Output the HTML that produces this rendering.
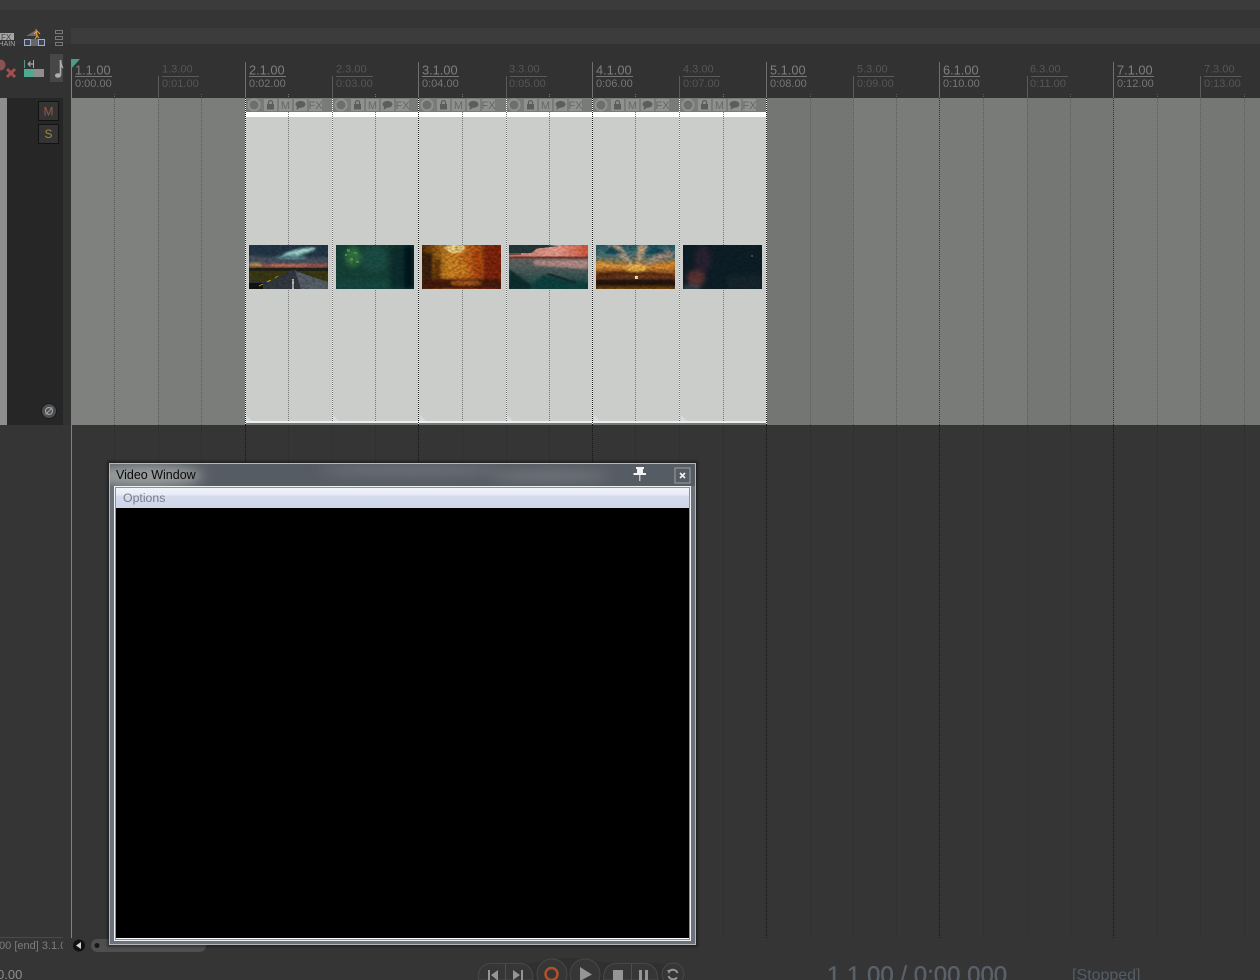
<!DOCTYPE html>
<html lang="en">
<head>
<meta charset="utf-8">
<title>Video Window</title>
<style>
html,body{margin:0;padding:0;width:1260px;height:980px;overflow:hidden;background:#353535}
svg{display:block}
text{font-family:"Liberation Sans",sans-serif}
.b{font-size:12.8px;fill:#7f7f7f}
.t{font-size:11px;fill:#767676}
.hb{font-size:11px;fill:#565656}
.ht{font-size:11px;fill:#565656}
.ic{font-size:11px;fill:#666866;text-anchor:middle}
</style>
</head>
<body>
<svg width="1260" height="980" viewBox="0 0 1260 980" xmlns="http://www.w3.org/2000/svg">
<defs>
<filter id="bl1" x="-20%" y="-20%" width="140%" height="140%"><feGaussianBlur stdDeviation="1"/></filter>
<filter id="bl2" x="-30%" y="-30%" width="160%" height="160%"><feGaussianBlur stdDeviation="2.5"/></filter>
<filter id="bl6" x="-30%" y="-60%" width="160%" height="220%"><feGaussianBlur stdDeviation="6"/></filter>
<filter id="tex" x="0" y="0" width="100%" height="100%"><feTurbulence type="fractalNoise" baseFrequency=".3 .45" numOctaves="2" seed="7"/><feColorMatrix values="0 0 0 0 0  0 0 0 0 0  0 0 0 0 0  1.600 0 0 0 -.55"/></filter>
<linearGradient id="menu" x1="0" y1="0" x2="0" y2="1"><stop offset="0" stop-color="#f2f4fb"/><stop offset=".35" stop-color="#e6eaf6"/><stop offset=".4" stop-color="#d5dcee"/><stop offset="1" stop-color="#cdd5e8"/></linearGradient>
<linearGradient id="sky3" x1="0" y1="0" x2="1" y2="0"><stop offset="0" stop-color="#5a3208"/><stop offset=".35" stop-color="#d88c24"/><stop offset=".6" stop-color="#c8641a"/><stop offset="1" stop-color="#84280c"/></linearGradient>
<linearGradient id="sky4" x1="0" y1="0" x2="1" y2="0"><stop offset="0" stop-color="#c87a6e"/><stop offset=".6" stop-color="#eaa090"/><stop offset="1" stop-color="#d8583c"/></linearGradient>
<linearGradient id="dark4" x1="0" y1="0" x2="0" y2="1"><stop offset="0" stop-color="#7a6c6a"/><stop offset=".5" stop-color="#566260"/><stop offset="1" stop-color="#124442"/></linearGradient>
<linearGradient id="t5" x1="0" y1="0" x2="0" y2="1"><stop offset="0" stop-color="#27616e"/><stop offset=".25" stop-color="#557a78"/><stop offset=".5" stop-color="#d08430"/><stop offset=".72" stop-color="#7a4220"/><stop offset=".88" stop-color="#2a1a10"/><stop offset="1" stop-color="#7a4a10"/></linearGradient>
<g id="slot">
<circle cx="9" cy="7" r="6.500" fill="#8f918f"/><circle cx="9" cy="7" r="4.500" fill="#6d6f6d"/>
<rect x="19" y="1" width="13" height="12" fill="#8f918f"/><rect x="22" y="6" width="7" height="5.500" fill="#5c5e5c"/><path d="M23.500 6V4.500a2 2 0 0 1 4 0V6" fill="none" stroke="#5c5e5c" stroke-width="1.300"/>
<rect x="34" y="1" width="13" height="12" fill="#8f918f"/>
<rect x="49" y="1" width="13" height="12" fill="#8f918f"/><ellipse cx="55.500" cy="6.300" rx="5" ry="3.400" fill="#5c5e5c"/><path d="M52 8.500L51.500 12L56 9z" fill="#5c5e5c"/>
<rect x="64" y="1" width="13" height="12" fill="#8f918f"/>
</g>
</defs>

<!-- base -->
<rect width="1260" height="980" fill="#353535"/>
<rect width="1260" height="10" fill="#3b3b3b"/>
<rect x="71" y="28" width="1189" height="16" fill="#3c3c3c"/>
<rect y="44" width="1260" height="54" fill="#323232"/>
<rect y="98" x="63" width="8" height="327" fill="#323232"/>

<!-- track -->
<rect x="71" y="98" width="1189" height="327" fill="#797b79"/>
<rect x="71" y="98" width="87" height="327" fill="#7f817f"/>
<rect x="158" y="98" width="87" height="327" fill="#7b7d7b"/>
<rect x="766" y="98" width="87" height="327" fill="#747674"/>
<rect x="853" y="98" width="87" height="327" fill="#7a7c7a"/>
<rect x="1027" y="98" width="86" height="327" fill="#757775"/>
<rect x="1200" y="98" width="60" height="327" fill="#757775"/>

<!-- media item -->
<rect x="245" y="112" width="522" height="5" fill="#ffffff"/>
<rect x="245" y="117" width="522" height="304" fill="#cbcdcb"/>
<rect x="245" y="421" width="522" height="2" fill="#eeeeee"/>
<rect x="245" y="423" width="522" height="2" fill="#767876"/>
<g fill="#dfe2ec" opacity=".6">
<path d="M246 415l6 6h-6z"/><path d="M333 415l6 6h-6z"/><path d="M420 415l6 6h-6z"/><path d="M507 415l6 6h-6z"/><path d="M594 415l6 6h-6z"/><path d="M681 415l6 6h-6z"/>
</g>

<!-- lower arrangement grid -->
<g shape-rendering="crispEdges" fill="none">
<path stroke="#5b5d5b" stroke-dasharray="1 1" d="M114.500 94V425M201.500 94V425M810.500 94V425M896.500 94V425M983.500 94V425M1070.500 94V425M1157.500 94V425M1244.500 94V425"/>
<path stroke="#777" stroke-dasharray="1 1" d="M288.500 94V421M375.500 94V421M462.500 94V421M549.500 94V421M635.500 94V421M723.500 94V421"/>
<path stroke="#5a5c5a" stroke-dasharray="1 1" d="M158.500 98V425M853.500 98V425M1027.500 98V425M1200.500 98V425"/>
<path stroke="#ffffff" d="M332.500 98V421M506.500 98V421M679.500 98V421M245.500 98V425M418.500 98V425M592.500 98V425M766.500 98V425"/>
<path stroke="#666" stroke-dasharray="1 1" d="M332.500 98V421M506.500 98V421M679.500 98V421"/>
<path stroke="#111" stroke-dasharray="1 1" d="M245.500 98V425M418.500 98V425M592.500 98V425M766.500 98V425"/>
<path stroke="#333" stroke-dasharray="1 1" d="M939.500 98V425M1113.500 98V425"/>
<path stroke="#2b2b2b" stroke-dasharray="1 1" d="M114.500 425V938M201.500 425V938M288.500 425V463M375.500 425V463M462.500 425V463M549.500 425V463M635.500 425V463M723.500 425V938M810.500 425V938M896.500 425V938M983.500 425V938M1070.500 425V938M1157.500 425V938M1244.500 425V938"/>
<path stroke="#2d2d2d" stroke-dasharray="1 1" d="M158.500 425V463M332.500 425V463M506.500 425V463M679.500 425V463M853.500 425V938M1027.500 425V938M1200.500 425V938"/>
<path stroke="#151515" stroke-dasharray="1 1" d="M245.500 425V463M418.500 425V463M592.500 425V463M766.500 425V938M939.500 425V938M1113.500 425V938"/>
<!-- ruler ticks -->
<path stroke="#6f6f6f" d="M245.500 62V98M418.500 62V98M592.500 62V98M766.500 62V98M939.500 62V98M1113.500 62V98"/>
<path stroke="#5a5a5a" d="M158.500 76V98M332.500 76V98M506.500 76V98M679.500 76V98M853.500 76V98M1027.500 76V98M1200.500 76V98"/>
<path stroke="#777" d="M75 76.500H112M249 76.500H286M422 76.500H459M596 76.500H633M770 76.500H807M943 76.500H980M1117 76.500H1154"/>
<path stroke="#5a5a5a" d="M162 76.500H199M336 76.500H373M510 76.500H547M683 76.500H720M857 76.500H894M1031 76.500H1068M1204 76.500H1241"/>
<!-- teal playhead line -->
<path stroke="#4b9c88" d="M71.500 62V938"/>
</g>
<path d="M71 59H80L71 69z" fill="#4b9c88"/>

<!-- ruler labels -->
<text class="b" x="75" y="74.500">1.1.00</text><text class="t" x="75" y="87">0:00.00</text>
<text class="hb" x="162" y="72.500">1.3.00</text><text class="ht" x="162" y="87">0:01.00</text>
<text class="b" x="249" y="74.500">2.1.00</text><text class="t" x="249" y="87">0:02.00</text>
<text class="hb" x="336" y="72.500">2.3.00</text><text class="ht" x="336" y="87">0:03.00</text>
<text class="b" x="422" y="74.500">3.1.00</text><text class="t" x="422" y="87">0:04.00</text>
<text class="hb" x="509" y="72.500">3.3.00</text><text class="ht" x="509" y="87">0:05.00</text>
<text class="b" x="596" y="74.500">4.1.00</text><text class="t" x="596" y="87">0:06.00</text>
<text class="hb" x="683" y="72.500">4.3.00</text><text class="ht" x="683" y="87">0:07.00</text>
<text class="b" x="770" y="74.500">5.1.00</text><text class="t" x="770" y="87">0:08.00</text>
<text class="hb" x="857" y="72.500">5.3.00</text><text class="ht" x="857" y="87">0:09.00</text>
<text class="b" x="943" y="74.500">6.1.00</text><text class="t" x="943" y="87">0:10.00</text>
<text class="hb" x="1030" y="72.500">6.3.00</text><text class="ht" x="1030" y="87">0:11.00</text>
<text class="b" x="1117" y="74.500">7.1.00</text><text class="t" x="1117" y="87">0:12.00</text>
<text class="hb" x="1204" y="72.500">7.3.00</text><text class="ht" x="1204" y="87">0:13.00</text>

<!-- item header icons -->
<use href="#slot" x="245" y="98"/><text class="ic" x="285.500" y="109">M</text><text class="ic" x="315.500" y="109">FX</text>
<use href="#slot" x="332" y="98"/><text class="ic" x="372.500" y="109">M</text><text class="ic" x="402.500" y="109">FX</text>
<use href="#slot" x="418" y="98"/><text class="ic" x="458.500" y="109">M</text><text class="ic" x="488.500" y="109">FX</text>
<use href="#slot" x="505" y="98"/><text class="ic" x="545.500" y="109">M</text><text class="ic" x="575.500" y="109">FX</text>
<use href="#slot" x="592" y="98"/><text class="ic" x="632.500" y="109">M</text><text class="ic" x="662.500" y="109">FX</text>
<use href="#slot" x="679" y="98"/><text class="ic" x="719.500" y="109">M</text><text class="ic" x="749.500" y="109">FX</text>

<!-- thumbnails -->
<svg x="249" y="245" width="79" height="44" viewBox="0 0 79 44">
<rect width="79" height="44" fill="#24384a"/>
<g filter="url(#bl1)">
<path d="M0 10Q30 14 79 12V20H0z" fill="#4a5360"/>
<ellipse cx="50" cy="7" rx="17" ry="2.800" fill="#a5dcd4" transform="rotate(-12 50 7)"/>
<ellipse cx="42" cy="12" rx="15" ry="2.200" fill="#5c8c92"/>
<rect y="19" width="79" height="3.500" fill="#a8584e"/>
<rect x="22" y="19.500" width="36" height="2" fill="#d07a58"/>
<rect x="0" y="18" width="12" height="3" fill="#b89a50"/>
</g>
<rect y="23" width="79" height="14" fill="#3c3a14"/>
<rect y="23" width="79" height="3" fill="#23241a"/>
<path d="M43 25L46 25L79 38V44H8z" fill="#333a41"/>
<path d="M46 26L79 37V44H52z" fill="#59626a"/>
<rect y="38" width="14" height="6" fill="#15140e"/>
<path d="M10 41L14 39M18 37L22 35M26 33L29 31" stroke="#c89028" stroke-width="1"/>
<rect x="43" y="34" width="2" height="10" fill="#b8bcbc"/>
<rect width="79" height="44" filter="url(#tex)" opacity=".35"/>
</svg>
<svg x="336" y="245" width="78" height="44" viewBox="0 0 78 44">
<rect width="78" height="44" fill="#164238"/>
<g filter="url(#bl2)">
<ellipse cx="17" cy="12" rx="8" ry="10" fill="#32703f"/>
<ellipse cx="38" cy="14" rx="13" ry="13" fill="#1b4e46"/>
<rect x="54" width="24" height="44" fill="#0d2e2e"/>
<rect y="36" width="54" height="8" fill="#174a42"/>
<rect x="68" width="10" height="44" fill="#06181c"/>
</g>
<g fill="#4d8f52"><rect x="11" y="4" width="3" height="3"/><rect x="17" y="7" width="4" height="2"/><rect x="14" y="13" width="3" height="3"/><rect x="20" y="16" width="3" height="2"/><rect x="9" y="9" width="2" height="2"/></g>
<rect width="78" height="44" filter="url(#tex)" opacity=".25"/>
</svg>
<svg x="422" y="245" width="79" height="44" viewBox="0 0 79 44">
<rect width="79" height="44" fill="url(#sky3)"/>
<g filter="url(#bl1)">
<path d="M30 0L50 30L22 30z" fill="#d88824" opacity=".7"/>
<ellipse cx="33" cy="3" rx="10" ry="5" fill="#f8d888"/>
<rect x="0" y="8" width="10" height="36" fill="#3d2008"/>
<rect x="12" y="14" width="6" height="22" fill="#6a3a0c"/>
<rect x="62" y="0" width="17" height="38" fill="#86260a"/>
<rect x="52" y="6" width="6" height="24" fill="#b84a10"/>
<rect y="34" width="79" height="10" fill="#4a1c08"/>
<ellipse cx="44" cy="38" rx="16" ry="2.500" fill="#b05a20"/>
</g>
<rect width="79" height="44" filter="url(#tex)" opacity=".5"/>
</svg>
<svg x="509" y="245" width="79" height="44" viewBox="0 0 79 44">
<rect width="79" height="44" fill="url(#dark4)"/>
<path d="M0 0H79V13H0z" fill="url(#sky4)"/>
<path d="M0 0H38L50 1L28 3.500L22 8H0z" fill="#25393b"/>
<path d="M0 8H12V10H0z" fill="#7e5048"/>
<path d="M0 11.500H79V13.500H0z" fill="#7a3a30"/>
<g filter="url(#bl1)">
<path d="M25 15H79V24Q50 22 25 20z" fill="#b88f88"/>
<path d="M0 24L28 44H0z" fill="#0c2e2e"/>
<path d="M34 30L79 38V44H20z" fill="#114240"/>
</g>
<path d="M40 28L68 37L66 39L38 30z" fill="#1c2e30"/>
<rect width="79" height="44" filter="url(#tex)" opacity=".3"/>
</svg>
<svg x="596" y="245" width="79" height="44" viewBox="0 0 79 44">
<rect width="79" height="44" fill="url(#t5)"/>
<g filter="url(#bl1)">
<path d="M40 24L10 0H24z" fill="#b8a48c"/><path d="M40 24L42 0H52z" fill="#c8a888"/><path d="M40 24L70 4L79 10z" fill="#a89080"/>
<path d="M0 16L40 23L0 22z" fill="#e8a040"/><path d="M79 16L40 23L79 24z" fill="#e09030"/>
<ellipse cx="40" cy="23" rx="11" ry="4" fill="#f4b848"/>
<path d="M0 28Q40 24 79 30V32Q40 28 0 33z" fill="#5a2c14"/>
<path d="M15 0L28 9H8z" fill="#14505e"/><path d="M58 0L74 9H48z" fill="#14505e"/>
<rect y="35" width="79" height="4" fill="#241810"/>
</g>
<rect x="39" y="31" width="3" height="3" fill="#fff0c0"/>
<rect width="79" height="44" filter="url(#tex)" opacity=".45"/>
</svg>
<svg x="683" y="245" width="79" height="44" viewBox="0 0 79 44">
<rect width="79" height="44" fill="#0e1f28"/>
<g filter="url(#bl2)">
<ellipse cx="13" cy="33" rx="9" ry="8" fill="#5e3434"/>
<ellipse cx="20" cy="14" rx="8" ry="14" fill="#2a2430"/>
<rect x="44" y="30" width="35" height="14" fill="#13282e"/>
<ellipse cx="8" cy="43" rx="11" ry="2.500" fill="#3e4e5c"/>
</g>
<rect x="68" y="10" width="2" height="2" fill="#3a5056"/>
<rect width="79" height="44" filter="url(#tex)" opacity=".3"/>
</svg>

<!-- left track panel -->
<rect x="0" y="98" width="7" height="327" fill="#8e8e8e"/>
<rect x="7" y="98" width="56" height="327" fill="#262626"/>
<rect x="38.500" y="101.500" width="20" height="19" fill="#343434" stroke="#131313"/>
<text x="48.500" y="115.500" font-size="12" fill="#97594a" text-anchor="middle">M</text>
<rect x="38.500" y="124.500" width="20" height="19" fill="#343434" stroke="#131313"/>
<text x="48.500" y="138" font-size="12" fill="#a08a3c" text-anchor="middle">S</text>
<circle cx="49" cy="411" r="7.500" fill="#4c4f52" stroke="#1b1b1b"/>
<circle cx="49" cy="411" r="3.500" fill="none" stroke="#a0a0a0" stroke-width="1.200"/>
<path d="M45.500 414.500L52.500 407.500" stroke="#a0a0a0" stroke-width="1.200"/>

<!-- toolbar icons -->
<rect x="0" y="33" width="14" height="7" fill="#a5a5a5"/>
<text x="1" y="40" font-size="8" fill="#444">FX</text>
<text x="-6.500" y="46" font-size="7" fill="#a5a5a5">CHAIN</text>
<path d="M26 36L36 30L38 36z" fill="#777" opacity=".8"/>
<path d="M36 29L37 36M37 31L34 34M37 31L40 34M37 36L35 39M37 36L39 38" stroke="#e8a040" stroke-width="1" fill="none"/>
<rect x="24" y="39" width="20" height="7" fill="#666"/>
<rect x="24.500" y="39.500" width="6" height="6" fill="#444" stroke="#9ab0d8"/>
<rect x="38.500" y="39.500" width="6" height="6" fill="#444" stroke="#9ab0d8"/>
<g fill="none" stroke="#777">
<rect x="55.500" y="30.500" width="7" height="3"/><rect x="55.500" y="36.500" width="7" height="3"/><rect x="55.500" y="42.500" width="7" height="3"/>
</g>
<circle cx="0" cy="65" r="5.500" fill="#8a5252"/>
<path d="M7 69L15 77M15 69L7 77" stroke="#a05050" stroke-width="3"/>
<path d="M24.500 60V68" stroke="#4b9c88"/><path d="M28 64H34M28 64L30.500 61.500M28 64L30.500 66.500" stroke="#aaa" fill="none" stroke-width="1.200"/><path d="M33.500 60V68" stroke="#aaa"/>
<rect x="24" y="69" width="10" height="8" fill="#4faa92"/><rect x="34" y="69" width="10" height="8" fill="#8e8e8e"/>
<rect x="50" y="54" width="13" height="28" fill="#474747"/>
<path d="M60.500 60V75" stroke="#aeaeae" stroke-width="1.600"/><path d="M60.500 60Q61 66 63 68" stroke="#aeaeae" stroke-width="1.500" fill="none"/><ellipse cx="58" cy="75.500" rx="3" ry="2.300" fill="#aeaeae"/>

<!-- bottom strip -->
<rect x="0" y="937" width="63" height="1" fill="#4a4a4a"/>
<text x="-4" y="949" font-size="11" fill="#7d7d7d">.00 [end] 3.1.0</text>
<rect x="63" y="938" width="8" height="14" fill="#353535"/>
<circle cx="79" cy="945.500" r="6" fill="#111"/>
<path d="M76 945.500L81 942V949z" fill="#d5d5d5"/>
<rect x="91" y="939" width="115" height="13" rx="6.500" fill="#4f4f4f"/>
<circle cx="97" cy="945.500" r="2.500" fill="#161616"/>
<text x="-3" y="979" font-size="13" fill="#8a8f8f">0.00</text>

<!-- transport -->
<path d="M478 975Q480 963 492 963H530Q540 962 552 959Q570 957 585 959Q596 961 610 963H655Q670 962 684 975V980H478z" fill="#303030"/>
<g fill="#363636" stroke="#484848">
<path d="M478.500 980V976Q479 963.500 492 963.500H520Q533 964 533 980z"/>
<path d="M603.500 980Q603 963.500 617 963.500H644Q657.500 964 658 980z"/>
<circle cx="552" cy="974" r="15"/>
<circle cx="585" cy="974" r="15"/>
<circle cx="673" cy="974" r="11"/>
</g>
<path d="M505.500 964V980M631.500 964V980" stroke="#4f4f4f"/>
<rect x="488" y="970" width="2" height="10" fill="#959595"/><path d="M498 970V980H497L491 975z" fill="#959595"/>
<rect x="521" y="970" width="2" height="10" fill="#959595"/><path d="M513 970V980L520 975z" fill="#959595"/>
<circle cx="551.500" cy="974" r="6" fill="none" stroke="#b0512a" stroke-width="2.500"/>
<path d="M580 967L592 974.500L580 981z" fill="#959595"/>
<rect x="613" y="970" width="10" height="10" fill="#959595"/>
<rect x="639" y="970" width="3" height="10" fill="#959595"/><rect x="645" y="970" width="3" height="10" fill="#959595"/>
<path d="M669 971.500A5 5 0 0 1 677.500 973M677 977.500A5 5 0 0 1 668.500 976" fill="none" stroke="#959595" stroke-width="2"/>
<path d="M667 970L671 970L669 974z" fill="#959595"/>
<text x="827" y="983" font-size="24" fill="#5a616b" stroke="#5a616b" stroke-width=".4">1.1.00 / 0:00.000</text>
<text x="1072" y="980" font-size="16" fill="#555c66">[Stopped]</text>

<!-- Video window -->
<rect x="107" y="461" width="591" height="486" fill="#000" opacity=".35" filter="url(#bl1)"/>
<rect x="109.500" y="463.500" width="586" height="481" fill="#6b727a" stroke="#b5b9be"/>
<rect x="110" y="464" width="585" height="22" fill="#565c63"/>
<svg x="110" y="464" width="585" height="22" viewBox="0 0 585 22">
<g filter="url(#bl6)">
<ellipse cx="35" cy="12" rx="58" ry="11" fill="#9a9e9f"/>
<ellipse cx="300" cy="6" rx="90" ry="6" fill="#6a7079"/>
<ellipse cx="440" cy="12" rx="60" ry="6" fill="#6e747c"/>
</g>
</svg>
<text x="116" y="479" font-size="12.500" fill="#0a0a0a">Video Window</text>
<rect x="114" y="486" width="577" height="455" fill="#f0f2f4"/>
<rect x="115" y="487" width="575" height="453" fill="#8b9197"/>
<rect x="116" y="488" width="573" height="451" fill="#fff"/>
<rect x="116" y="488" width="573" height="20" fill="url(#menu)"/>
<text x="123" y="502" font-size="12.300" fill="#777c85">Options</text>
<rect x="116" y="508" width="573" height="430" fill="#000"/>
<!-- pin -->
<path d="M636 467H644V469H643V473H646V475H640.300V481H639.300V475H633.500V473H637V469H636z" fill="#f2f2f2"/>
<!-- close -->
<rect x="675" y="468" width="15" height="15" fill="#565c64" stroke="#9aa0a6"/>
<path d="M680 473L685 478M685 473L680 478" stroke="#f0f0f0" stroke-width="1.600"/>
</svg>
</body>
</html>
